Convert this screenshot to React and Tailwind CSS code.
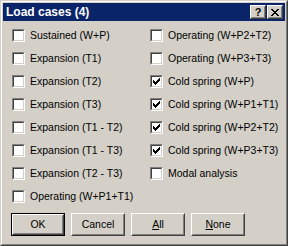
const left = [
  'Sustained (W+P)',
  'Expansion (T1)',
  'Expansion (T2)',
  'Expansion (T3)',
  'Expansion (T1 - T2)',
  'Expansion (T1 - T3)',
  'Expansion (T2 - T3)',
  'Operating (W+P1+T1)',
];

const right = [
  ['Operating (W+P2+T2)', false],
  ['Operating (W+P3+T3)', false],
  ['Cold spring (W+P)', true],
  ['Cold spring (W+P1+T1)', true],
  ['Cold spring (W+P2+T2)', true],
  ['Cold spring (W+P3+T3)', true],
  ['Modal analysis', false],
];

function Check({ checked }) {
  return (
    <div className="w-[13px] h-[13px] shrink-0 border border-t-[#808080] border-l-[#808080] border-r-white border-b-white">
      <div className="w-full h-full bg-white border border-t-[#404040] border-l-[#404040] border-r-[#d4d0c8] border-b-[#d4d0c8] flex items-center justify-center">
        {checked && (
          <svg width="7" height="7" viewBox="0 0 7 7" shapeRendering="crispEdges">
            <path
              d="M0 2h1v3h-1zM1 3h1v3h-1zM2 4h1v3h-1zM3 3h1v3h-1zM4 2h1v3h-1zM5 1h1v3h-1zM6 0h1v3h-1z"
              fill="#000"
            />
          </svg>
        )}
      </div>
    </div>
  );
}

function Row({ label, checked }) {
  return (
    <div className="h-[13px] flex items-center gap-[5px]">
      <Check checked={checked} />
      <span className="text-[10.5px] leading-[13px] whitespace-nowrap">{label}</span>
    </div>
  );
}

function Button({ children, primary }) {
  const face = (
    <div className="w-full h-full border border-t-white border-l-white border-r-[#404040] border-b-[#404040]">
      <div className="w-full h-full border border-t-[#d4d0c8] border-l-[#d4d0c8] border-r-[#808080] border-b-[#808080] flex items-center justify-center text-[10.5px]">
        {children}
      </div>
    </div>
  );
  return (
    <div className={`w-[54px] h-[23px] ${primary ? 'border border-black' : ''}`}>{face}</div>
  );
}

function TitleButton({ children }) {
  return (
    <div className="w-[16px] h-[14px] bg-[#d4d0c8] border border-t-white border-l-white border-r-[#404040] border-b-[#404040]">
      <div className="w-full h-full border border-t-[#d4d0c8] border-l-[#d4d0c8] border-r-[#808080] border-b-[#808080] flex items-center justify-center">
        {children}
      </div>
    </div>
  );
}

export default function App() {
  return (
    <div
      className="w-[288px] h-[246px] bg-[#d4d0c8] text-black border border-t-[#d4d0c8] border-l-[#d4d0c8] border-r-[#404040] border-b-[#404040]"
      style={{ fontFamily: '"Liberation Sans", Arial, sans-serif' }}
    >
      <div className="w-full h-full p-px border border-t-white border-l-white border-r-[#808080] border-b-[#808080] flex flex-col">
        {/* Title bar */}
        <div className="h-[18px] bg-[#0a246a] flex items-center justify-between pl-[3px] pr-[2px]">
          <span className="text-white font-bold text-[12px] leading-none">Load cases (4)</span>
          <div className="flex gap-[1px]">
            <TitleButton>
              <span className="text-[11px] font-bold leading-none">?</span>
            </TitleButton>
            <TitleButton>
              <svg width="8" height="7" viewBox="0 0 8 7" shapeRendering="crispEdges">
                <path
                  d="M0 0h2v1h-2zM6 0h2v1h-2zM1 1h2v1h-2zM5 1h2v1h-2zM2 2h4v1h-4zM3 3h2v1h-2zM2 4h4v1h-4zM1 5h2v1h-2zM5 5h2v1h-2zM0 6h2v1h-2zM6 6h2v1h-2z"
                  fill="#000"
                />
              </svg>
            </TitleButton>
          </div>
        </div>

        {/* Checkbox columns */}
        <div className="flex pl-[9px] pt-[8px]">
          <div className="w-[138px] flex flex-col gap-[10px]">
            {left.map((l) => (
              <Row key={l} label={l} checked={false} />
            ))}
          </div>
          <div className="flex flex-col gap-[10px]">
            {right.map(([l, c]) => (
              <Row key={l} label={l} checked={c} />
            ))}
          </div>
        </div>

        {/* Buttons */}
        <div className="flex gap-[6px] pl-[8px] mt-[10px]">
          <Button primary>OK</Button>
          <Button>Cancel</Button>
          <Button>
            <span className="underline">A</span>ll
          </Button>
          <Button>
            <span className="underline">N</span>one
          </Button>
        </div>
      </div>
    </div>
  );
}
